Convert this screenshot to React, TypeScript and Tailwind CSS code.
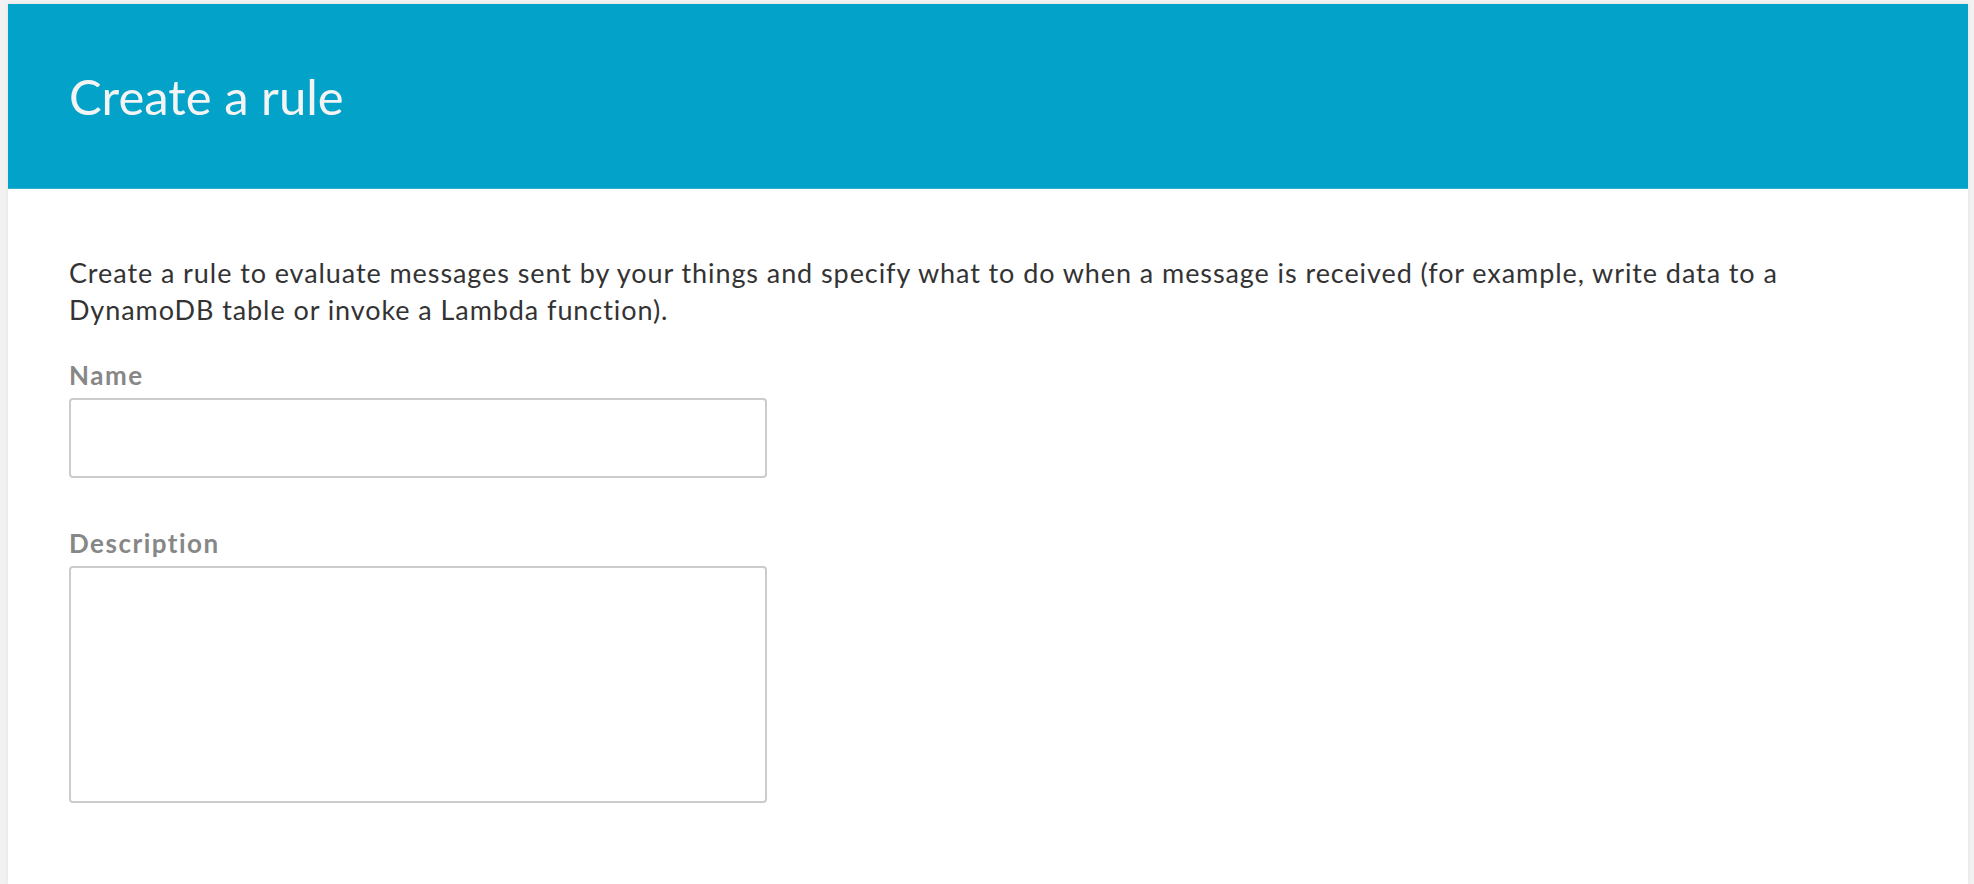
export default function App() {
  return (
    <div className="min-h-[884px] bg-[#f2f2f2] pt-[4px] pl-[8px] pr-[6px] font-['Lato',sans-serif]">
      <div className="min-h-[880px] bg-white shadow-[0_0_4px_rgba(0,0,0,0.08)]">
        <div className="flex h-[185px] items-center border-b border-[#2db0d2] bg-[#02a2c9] px-[61px]">
          <h1 className="text-[49px] font-normal leading-none text-[#f4f4f4]">Create a rule</h1>
        </div>

        <div className="px-[61px] pt-[65px]">
          <p className="text-[27px] leading-[37px] tracking-[0.92px] text-[#333333]">
            Create a rule to evaluate messages sent by your things and specify what to do when a message is received (for
            example, write data to a DynamoDB table or invoke a Lambda function).
          </p>

          <label className="mt-[32px] block text-[26px] font-bold leading-[30px] tracking-[1.5px] text-[#878787]">
            Name
          </label>
          <input
            type="text"
            className="mt-[8px] block h-[80px] w-[698px] rounded-[4px] border-2 border-[#cccccc] bg-white px-3 text-[24px] outline-none"
          />

          <label className="mt-[50px] block text-[26px] font-bold leading-[30px] tracking-[1.5px] text-[#878787]">
            Description
          </label>
          <textarea className="mt-[8px] block h-[237px] w-[698px] resize-none rounded-[4px] border-2 border-[#cccccc] bg-white px-3 py-2 text-[24px] outline-none" />
        </div>
      </div>
    </div>
  );
}
